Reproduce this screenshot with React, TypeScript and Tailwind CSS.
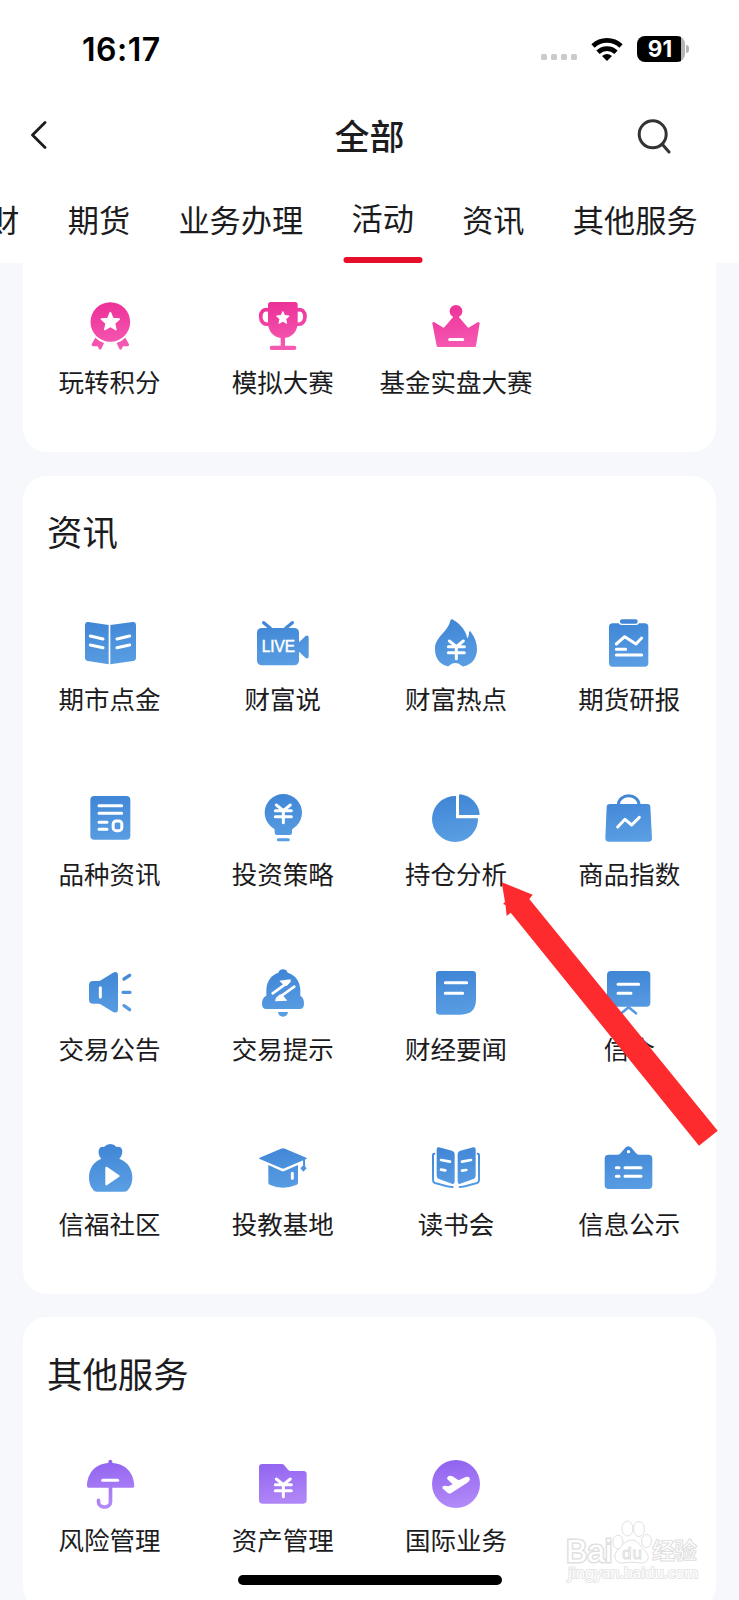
import React from 'react';

type Tone = 'pink' | 'blue' | 'purple';

interface ServiceItem {
  label: string;
  icon: React.ReactNode;
}

const fills: Record<Tone, string> = {
  pink: 'url(#tone-pink)',
  blue: 'url(#tone-blue)',
  purple: 'url(#tone-purple)',
};

const Gradients: React.FC = () => (
  <svg className="absolute h-0 w-0" aria-hidden="true">
    <defs>
      <linearGradient id="tone-pink" gradientUnits="userSpaceOnUse" x1="80" y1="18" x2="100" y2="162">
        <stop offset="0" stopColor="#ec2f97" />
        <stop offset="1" stopColor="#f65cb4" />
      </linearGradient>
      <linearGradient id="tone-blue" gradientUnits="userSpaceOnUse" x1="80" y1="18" x2="100" y2="162">
        <stop offset="0" stopColor="#4085d5" />
        <stop offset="1" stopColor="#5a9fe3" />
      </linearGradient>
      <linearGradient id="tone-purple" gradientUnits="userSpaceOnUse" x1="80" y1="18" x2="100" y2="162">
        <stop offset="0" stopColor="#9163f0" />
        <stop offset="1" stopColor="#b48bf8" />
      </linearGradient>
    </defs>
  </svg>
);

// Every service icon is drawn on a 180 unit square
const Icon: React.FC<{ tone: Tone; children: React.ReactNode }> = ({ tone, children }) => (
  <svg viewBox="0 0 180 180" className="h-15 w-15 shrink-0" fill={fills[tone]}>
    {children}
  </svg>
);

const Cut: React.FC<{ d: string; width?: number }> = ({ d, width = 9 }) => (
  <path d={d} fill="none" stroke="#fff" strokeWidth={width} strokeLinecap="round" strokeLinejoin="round" />
);

const Line: React.FC<{ d: string; tone: Tone; width?: number }> = ({ d, tone, width = 8 }) => (
  <path d={d} fill="none" stroke={fills[tone]} strokeWidth={width} strokeLinecap="round" strokeLinejoin="round" />
);

const Yen: React.FC<{ y: number }> = ({ y }) => (
  <g transform={`translate(91 ${y})`}>
    <Cut d="M-21-16L0 1L21-16M-24 1H24M-24 19H24M0 1V37" />
  </g>
);

const Star: React.FC<{ x: number; y: number; scale: number }> = ({ x, y, scale }) => (
  <path
    transform={`translate(${x} ${y}) scale(${scale})`}
    d="M0-28L7.6-10.5L26.6-8.7L12.4 4L16.5 22.7L0 13L-16.5 22.7L-12.4 4L-26.6-8.7L-7.6-10.5Z"
    fill="#fff"
    stroke="#fff"
    strokeWidth="5"
    strokeLinejoin="round"
  />
);

const activityItems: ServiceItem[] = [
  {
    label: '玩转积分',
    icon: (
      <Icon tone="pink">
        <circle cx="91" cy="78" r="59.5" />
        <path d="M46 125Q58 137 72 141L64 159Q60 164 57 159L53 151L39 151Q33 150 35 145Z" />
        <path d="M136 125Q124 137 110 141L118 159Q122 164 125 159L129 151L143 151Q149 150 147 145Z" />
        <Star x={91} y={78} scale={1} />
      </Icon>
    ),
  },
  {
    label: '模拟大赛',
    icon: (
      <Icon tone="pink">
        <path d="M53 18H126Q134 18 134 26V80C134 106 116 126 89.500 126S45 106 45 80V26Q45 18 53 18Z" />
        <path d="M83 120H96V152H83Z" />
        <rect x="50" y="149" width="80" height="13" rx="6" />
        <Line tone="pink" width={11} d="M47 42C32 37 23 48 23 62S32 88 49 84M132 42C147 37 156 48 156 62S147 88 130 84" />
        <Star x={89.5} y={66} scale={0.68} />
      </Icon>
    ),
  },
  {
    label: '基金实盘大赛',
    icon: (
      <Icon tone="pink">
        <circle cx="90" cy="46" r="19" />
        <path
          d="M23 82L54 101L84 66Q90 60 96 66L126 101L157 82L146 149H36Z"
          stroke="url(#tone-pink)"
          strokeWidth="8"
          strokeLinejoin="round"
        />
        <Cut d="M71 130.500H110" width={9} />
      </Icon>
    ),
  },
];

const newsItems: ServiceItem[] = [
  {
    label: '期市点金',
    icon: (
      <Icon tone="blue">
        <path d="M25 27L86 36V154L24 144Q15 142 15 134V37Q15 26 25 27Z" />
        <path d="M158 27L91 36V154L159 144Q168 142 168 134V37Q168 26 158 27Z" />
        <Cut d="M31 69L69 78M31 96L69 104M111 78L149 69M111 104L149 96" />
      </Icon>
    ),
  },
  {
    label: '财富说',
    icon: (
      <Icon tone="blue">
        <rect x="12" y="45" width="126" height="112" rx="14" />
        <path d="M138 88L157 70Q167 64 167 74V130Q167 140 157 134L138 116Z" />
        <Line tone="blue" width={10} d="M32 29L52 46M118 29L98 46" />
        <text
          x="26"
          y="116"
          fill="#fff"
          fontSize="47"
          textLength="100"
          lengthAdjust="spacingAndGlyphs"
          fontFamily="Liberation Sans, sans-serif"
          stroke="#fff"
          strokeWidth="1.500"
        >
          LIVE
        </text>
      </Icon>
    ),
  },
  {
    label: '财富热点',
    icon: (
      <Icon tone="blue">
        <path d="M79 19C92 27 118 44 124 76C128 71 129 65 129 58C130 53 134 55 136 59C147 74 153 90 153 108C153 136 138 154 114 160Q108 161 104 156Q98 150 88 150Q78 150 72 156Q68 161 62 159C39 152 27 134 27 108C27 70 64 60 73 23Q75 17 79 19Z" />
        <Yen y={100} />
      </Icon>
    ),
  },
  {
    label: '期货研报',
    icon: (
      <Icon tone="blue">
        <rect x="30" y="31" width="118" height="130" rx="11" />
        <rect x="59" y="15" width="61" height="21" rx="9" fill="#fff" />
        <rect x="63" y="19" width="53" height="13" rx="6" />
        <Cut d="M52 93L77 71L111 93L128 75M52 109H80M52 126H128" />
      </Icon>
    ),
  },
  {
    label: '品种资讯',
    icon: (
      <Icon tone="blue">
        <rect x="31" y="24" width="120" height="131" rx="12" />
        <Cut d="M57 53H125M57 76H125M57 103H81M57 124H81" />
        <rect x="99.500" y="99" width="26" height="29" rx="9" fill="none" stroke="#fff" strokeWidth="9" />
      </Icon>
    ),
  },
  {
    label: '投资策略',
    icon: (
      <Icon tone="blue">
        <circle cx="91" cy="74" r="56" />
        <path d="M60 112L65 126V134Q65 141 72 141H110Q117 141 117 134V126L124 112Z" />
        <Line tone="blue" width={9} d="M76 155.500H106" />
        <Yen y={67} />
      </Icon>
    ),
  },
  {
    label: '持仓分析',
    icon: (
      <Icon tone="blue">
        <path d="M90 24V91H156A69 69 0 1 1 90 24Z" />
        <path d="M102 19A66 66 0 0 1 161 77Q161 81 158 81H99V22Q99 19 102 19Z" />
      </Icon>
    ),
  },
  {
    label: '商品指数',
    icon: (
      <Icon tone="blue">
        <path d="M33 48H145Q154 48 154 57L159 151Q159 161 150 161H28Q19 161 19 151L23 57Q23 48 33 48Z" />
        <Line tone="blue" width={9} d="M58 50A31 27 0 0 1 120 50" />
        <Cut d="M56 117L78 94L98 111L121 88" />
      </Icon>
    ),
  },
  {
    label: '交易公告',
    icon: (
      <Icon tone="blue">
        <path d="M39 54H55Q60 54 64 51L98 30Q114 22 114 38V138Q114 154 98 146L64 125Q60 122 55 122H39Q27 122 27 110V66Q27 54 39 54Z" />
        <Cut d="M61 74V102" />
        <Line tone="blue" width={10} d="M132 48L149 37M129 88H150M132 128L149 140" />
      </Icon>
    ),
  },
  {
    label: '交易提示',
    icon: (
      <Icon tone="blue">
        <path d="M76 29Q80 19 90 19T104 29C127 36 141 54 142 80V98Q153 104 153 122Q153 138 140 138H40Q27 138 27 122Q27 104 40 98V80C41 54 55 36 76 29Z" />
        <path d="M75 147H105Q103 161 90 161T75 147Z" />
        <Cut d="M59 91L109 55M72 108L124 71" width={8} />
        <path d="M79 53L113 49L112 57L102 68Q92 72 88 62ZM103 113L66 115L69 105L79 95Q90 90 93 101Z" fill="#fff" />
      </Icon>
    ),
  },
  {
    label: '财经要闻',
    icon: (
      <Icon tone="blue">
        <path d="M40 24H140Q150 24 150 34V109Q150 155 104 155H40Q30 155 30 145V34Q30 24 40 24Z" />
        <Cut d="M58 59H122M58 91H110" />
      </Icon>
    ),
  },
  {
    label: '信介',
    icon: (
      <Icon tone="blue">
        <rect x="24" y="24" width="130" height="107" rx="12" />
        <Line tone="blue" d="M67 151L89 133L111 151" />
        <Cut d="M57 64H119M57 91H96" />
      </Icon>
    ),
  },
  {
    label: '信福社区',
    icon: (
      <Icon tone="blue">
        <path d="M64 62C55 52 54 40 58 32Q62 24 72 27Q80 18 91 18T110 27Q121 24 125 32C129 40 127 52 118 62C144 72 157 94 157 118C157 138 150 150 142 158Q138 161 132 161H52Q46 161 42 158C34 150 27 138 27 118C27 94 39 72 64 62Z" />
        <path d="M79 89L116 114L79 139Z" fill="#fff" stroke="#fff" strokeWidth="6" strokeLinejoin="round" />
      </Icon>
    ),
  },
  {
    label: '投教基地',
    icon: (
      <Icon tone="blue">
        <path d="M20 59L84 32Q90 29 96 32L160 59Q163 61 160 63L96 90Q90 93 84 90L20 63Q16 61 20 59Z" />
        <path d="M46 81L84 98Q90 101 96 98L135 81V134Q135 138 131 140Q90 158 50 140Q46 138 46 134Z" />
        <Line tone="blue" width={6} d="M153 62L153.500 88" />
        <path d="M152 81L161 91L151 101L142 91Z" />
        <Cut d="M118 106V121" />
      </Icon>
    ),
  },
  {
    label: '读书会',
    icon: (
      <Icon tone="blue">
        <path d="M39 28L78 38Q86 40 86 48V130Q86 140 78 137L39 123Q32 121 32 113V34Q32 27 39 28Z" />
        <path d="M142 28L103 38Q95 40 95 48V130Q95 140 103 137L142 123Q149 121 149 113V34Q149 27 142 28Z" />
        <Line
          tone="blue"
          width={6}
          d="M25 47Q21 47 21 52V127Q21 133 27 135L60 144Q70 147 80 147M155 47Q159 47 159 52V127Q159 133 153 135L120 144Q110 147 101 147"
        />
        <Cut d="M45 66L72 71M45 95L58 97M108 71L135 66M108 98L121 96" width={8} />
      </Icon>
    ),
  },
  {
    label: '信息公示',
    icon: (
      <Icon tone="blue">
        <rect x="17" y="50" width="143" height="103" rx="12" />
        <path d="M56 52Q62 50 68 42L78 30Q88 19 98 30L108 42Q114 50 120 52Z" />
        <circle cx="88.500" cy="41" r="5" fill="#fff" />
        <Cut d="M52 89H60M78 89H126M52 115H60M78 115H126" />
      </Icon>
    ),
  },
];

const otherItems: ServiceItem[] = [
  {
    label: '风险管理',
    icon: (
      <Icon tone="purple">
        <path d="M85 27V23Q86 17 91 17T97 23V27C136 29 162 56 163 96Q163 101 158 101H26Q21 101 21 96C22 56 48 29 85 27Z" />
        <Line tone="purple" width={11} d="M91.500 98V144A18 15 0 0 1 55.500 144V139" />
        <Cut d="M68 79H113" />
      </Icon>
    ),
  },
  {
    label: '资产管理',
    icon: (
      <Icon tone="purple">
        <path d="M28 30H86Q91 30 94 34L105 47Q108 51 113 51H151Q161 51 161 61V139Q161 149 151 149H28Q18 149 18 139V40Q18 30 28 30Z" />
        <Yen y={91} />
      </Icon>
    ),
  },
  {
    label: '国际业务',
    icon: (
      <Icon tone="purple">
        <circle cx="90" cy="90" r="72" />
        <path
          d="M67 67Q73 63 79 67L98 79L119 69Q130 66 132 75Q132 80 124 86L77 116Q69 122 62 114L49 103Q48 96 55 95L67 97L80 91L64 76Q61 71 67 67Z"
          fill="#fff"
        />
      </Icon>
    ),
  },
];

const tabs = ['理财', '期货', '业务办理', '活动', '资讯', '其他服务'];

const StatusBar: React.FC = () => (
  <div className="flex h-[96px] items-center pl-[82px] pr-[50px] pt-px text-black">
    <span className="mt-0.5 font-[Inter,sans-serif] text-[32px] font-semibold leading-none tracking-[0.5px]">16:17</span>
    <div className="ml-auto flex items-center">
      <div className="mr-[14px] mt-[17px] flex gap-1">
        {[0, 1, 2, 3].map((dot) => (
          <span key={dot} className="h-1.5 w-1.5 rounded-[1.5px] bg-[#cbcbcb]" />
        ))}
      </div>
      <svg viewBox="0 0 32 24" className="mr-[14px] h-6 w-8" fill="none" stroke="#000" strokeWidth="4.800">
        <path d="M2 9A20.500 20.500 0 0 1 30 9" />
        <path d="M7 15.200A13 13 0 0 1 25 15.200" />
        <path d="M11 19Q16 14.800 21 19L16 24Z" fill="#000" stroke="none" />
      </svg>
      <div className="flex h-[26px] w-12 items-center justify-center overflow-hidden rounded-[8px] bg-linear-to-r from-black from-91% to-[#b4b4b4] to-91% pr-0.5 pt-0.5 font-[Inter,sans-serif] text-[22.5px] font-bold leading-none text-white">
        91
      </div>
      <span className="ml-px h-2 w-[3px] rounded-r-full bg-[#b4b4b4]" />
    </div>
  </div>
);

const NavBar: React.FC = () => (
  <div className="grid h-20 grid-cols-3 items-center pl-[30px] pr-[30px]">
    <svg
      viewBox="0 0 18 30"
      className="h-[30px] w-[18px]"
      fill="none"
      stroke="#1c1c1e"
      strokeWidth="2.800"
      strokeLinecap="round"
      strokeLinejoin="round"
    >
      <path d="M15 1.500L2.500 14L15 26.500" />
    </svg>
    <h1 className="-mt-1 text-center text-[35px] font-medium leading-none text-[#1c1c1e]">全部</h1>
    <svg
      viewBox="0 0 36 36"
      className="mr-9 h-9 w-9 justify-self-end"
      fill="none"
      stroke="#333"
      strokeWidth="3"
      strokeLinecap="round"
    >
      <circle cx="15.700" cy="16.300" r="13.500" />
      <path d="M25.500 26.500L32 34" />
    </svg>
  </div>
);

const TabBar: React.FC = () => (
  <div className="-ml-[43px] flex h-[87px] gap-[48.3px] whitespace-nowrap text-[31.2px] leading-[85px] text-[#1c1c1e]">
    {tabs.map((tab) => (
      <div key={tab} className="relative shrink-0">
        {tab === '活动' ? (
          <>
            <span className="block leading-[81px]">{tab}</span>
            <span className="absolute bottom-0 left-1/2 h-1.5 w-[79px] -translate-x-1/2 rounded-full bg-[#e60f2a]" />
          </>
        ) : (
          tab
        )}
      </div>
    ))}
  </div>
);

const ServiceGrid: React.FC<{ items: ServiceItem[] }> = ({ items }) => (
  <div className="grid grid-cols-4 gap-y-[72px]">
    {items.map((item) => (
      <div key={item.label} className="flex flex-col items-center">
        {item.icon}
        <span className="mt-[7px] whitespace-nowrap text-[25.5px] leading-9 text-[#1c1c1e]">{item.label}</span>
      </div>
    ))}
  </div>
);

const Section: React.FC<{ title: string; items: ServiceItem[] }> = ({ title, items }) => (
  <section className="rounded-[24px] bg-white pb-[53px] pt-[30.5px]">
    <h2 className="mb-[56.5px] pl-6 text-[35.4px] leading-[50px] text-[#1c1c1e]">{title}</h2>
    <ServiceGrid items={items} />
  </section>
);

const Watermark: React.FC = () => (
  <svg
    viewBox="0 0 138 70"
    className="absolute left-[564px] top-[1515px] h-[70px] w-[138px]"
    fill="#fff"
    stroke="#e0e0e0"
    strokeWidth="1"
  >
    <text x="2" y="47" fontSize="32" textLength="46" strokeWidth="3" paintOrder="stroke" fontFamily="Liberation Sans, sans-serif">
      Bai
    </text>
    <ellipse cx="54" cy="27" rx="5" ry="7" />
    <ellipse cx="63.500" cy="13.500" rx="5.500" ry="7.500" />
    <ellipse cx="75" cy="14" rx="5.500" ry="7.500" />
    <ellipse cx="82.500" cy="26" rx="5" ry="6.500" />
    <path d="M68 25C74 25 77 32 82 37C87 43 83 49 76 48C71 47 65 47 60 48C52 49 48 42 53 36C58 31 61 25 68 25Z" />
    <text x="58" y="44" fontSize="17" textLength="20" fontFamily="Liberation Sans, sans-serif">
      du
    </text>
    <text x="88" y="44" fontSize="23" fontWeight="bold" textLength="45" fontFamily="Noto Sans CJK SC, sans-serif">
      经验
    </text>
    <text x="4" y="63" fontSize="15" textLength="130" strokeWidth="2" paintOrder="stroke" stroke="#e6e6e6" fontFamily="Noto Sans, sans-serif">
      jingyan.baidu.com
    </text>
  </svg>
);

const App: React.FC = () => {
  return (
    <div className="relative h-[1600px] w-[739px] overflow-hidden bg-[#f6f8fc] font-['Noto_Sans_CJK_SC',sans-serif]">
      <Gradients />
      <header className="bg-white">
        <StatusBar />
        <NavBar />
        <TabBar />
      </header>
      <main className="flex flex-col gap-[23.5px] px-[23px]">
        <section className="rounded-b-[24px] bg-white pb-[53px] pt-[33px]">
          <ServiceGrid items={activityItems} />
        </section>
        <Section title="资讯" items={newsItems} />
        <Section title="其他服务" items={otherItems} />
      </main>
      <svg viewBox="0 0 220 268" className="absolute left-[500px] top-[880px] h-[268px] w-[220px]" fill="#fd2b2d">
        <path d="M1.700 2.300L32.700 14.700L29.300 19L217.700 250.700L199 265.700L10.700 32.700L6.700 36L5.500 25L3 24L5 22Z" />
      </svg>
      <Watermark />
      <div className="absolute left-[238px] top-[1575px] h-2.5 w-[264px] rounded-full bg-black" />
    </div>
  );
};

export default App;
